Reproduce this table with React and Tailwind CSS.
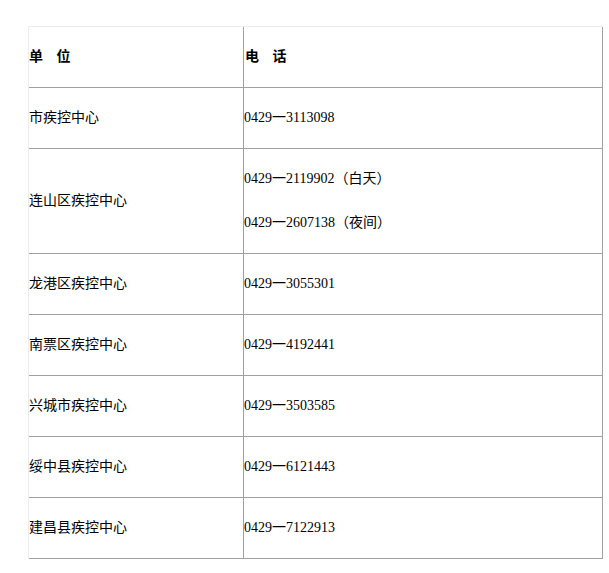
import React from 'react';

const rows = [
  { name: '市疾控中心', phones: ['0429一3113098'] },
  { name: '连山区疾控中心', phones: ['0429一2119902（白天）', '0429一2607138（夜间）'] },
  { name: '龙港区疾控中心', phones: ['0429一3055301'] },
  { name: '南票区疾控中心', phones: ['0429一4192441'] },
  { name: '兴城市疾控中心', phones: ['0429一3503585'] },
  { name: '绥中县疾控中心', phones: ['0429一6121443'] },
  { name: '建昌县疾控中心', phones: ['0429一7122913'] },
];

const App = () => {
  return (
    <div
      className="min-h-[573px] bg-white pt-[26px] pl-[28px] text-[14px] leading-[22px] text-black"
      style={{ fontFamily: '"Liberation Serif", "Noto Sans CJK SC", serif' }}
    >
      <div className="w-[574px] border-t border-l border-[#ececec]">
        {/* header */}
        <div className="grid grid-cols-[215px_359px]">
          <div className="h-[61px] flex items-center border-r border-b border-[#a0a0a0] font-bold [word-spacing:10px]">
            单 位
          </div>
          <div className="h-[61px] flex items-center pl-[1px] border-r border-b border-[#a0a0a0] font-bold [word-spacing:10px]">
            电 话
          </div>
        </div>

        {rows.map((row) => {
          const tall = row.phones.length > 1;
          return (
            <div key={row.name} className="grid grid-cols-[215px_359px]">
              <div
                className={`${tall ? 'h-[105px]' : 'h-[61px]'} flex items-center border-r border-b border-[#a0a0a0]`}
              >
                {row.name}
              </div>
              <div
                className={`${tall ? 'h-[105px]' : 'h-[61px]'} flex flex-col justify-center gap-[22px] border-r border-b border-[#a0a0a0]`}
              >
                {row.phones.map((p) => (
                  <p key={p}>{p}</p>
                ))}
              </div>
            </div>
          );
        })}
      </div>
    </div>
  );
};

export default App;
